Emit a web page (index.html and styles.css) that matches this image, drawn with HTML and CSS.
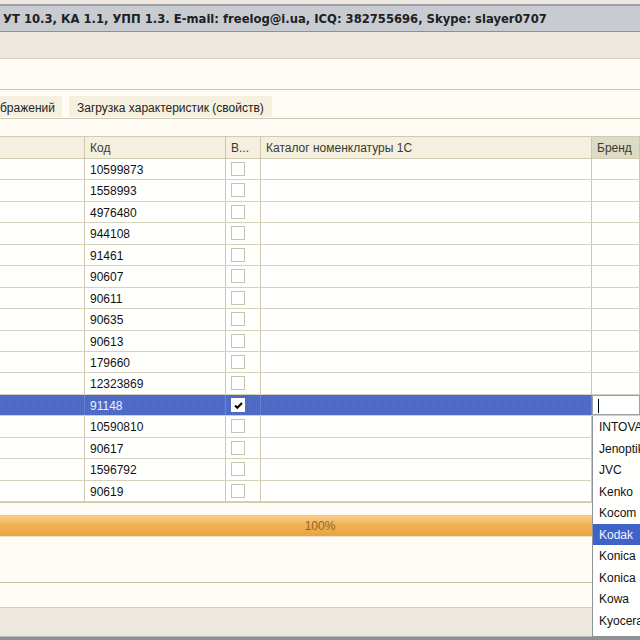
FILE: index.html
```html
<!DOCTYPE html>
<html>
<head>
<meta charset="utf-8">
<link rel="stylesheet" href="styles.css">
</head>
<body>
<div class="screen">
  <div class="topstrip"></div>
  <div class="titlebar">УТ 10.3, КА 1.1, УПП 1.3. E-mail: freelog@i.ua, ICQ: 382755696, Skype: slayer0707</div>
  <div class="toolbar"></div>
  <div class="panel"></div>
  <div class="tabs">
    <div class="tab first">бражений</div>
    <div class="tab">Загрузка характеристик (свойств)</div>
  </div>
  <div class="gap"></div>
  <div class="grid">
    <div class="row head">
      <div class="cell"></div>
      <div class="cell">Код</div>
      <div class="cell">В...</div>
      <div class="cell">Каталог номенклатуры 1С</div>
      <div class="cell brand">Бренд</div>
    </div>
    <div class="row"><div class="cell"></div><div class="cell">10599873</div><div class="cell chk"><span class="box"></span></div><div class="cell"></div><div class="cell"></div></div>
    <div class="row"><div class="cell"></div><div class="cell">1558993</div><div class="cell chk"><span class="box"></span></div><div class="cell"></div><div class="cell"></div></div>
    <div class="row"><div class="cell"></div><div class="cell">4976480</div><div class="cell chk"><span class="box"></span></div><div class="cell"></div><div class="cell"></div></div>
    <div class="row"><div class="cell"></div><div class="cell">944108</div><div class="cell chk"><span class="box"></span></div><div class="cell"></div><div class="cell"></div></div>
    <div class="row"><div class="cell"></div><div class="cell">91461</div><div class="cell chk"><span class="box"></span></div><div class="cell"></div><div class="cell"></div></div>
    <div class="row"><div class="cell"></div><div class="cell">90607</div><div class="cell chk"><span class="box"></span></div><div class="cell"></div><div class="cell"></div></div>
    <div class="row"><div class="cell"></div><div class="cell">90611</div><div class="cell chk"><span class="box"></span></div><div class="cell"></div><div class="cell"></div></div>
    <div class="row"><div class="cell"></div><div class="cell">90635</div><div class="cell chk"><span class="box"></span></div><div class="cell"></div><div class="cell"></div></div>
    <div class="row"><div class="cell"></div><div class="cell">90613</div><div class="cell chk"><span class="box"></span></div><div class="cell"></div><div class="cell"></div></div>
    <div class="row"><div class="cell"></div><div class="cell">179660</div><div class="cell chk"><span class="box"></span></div><div class="cell"></div><div class="cell"></div></div>
    <div class="row"><div class="cell"></div><div class="cell">12323869</div><div class="cell chk"><span class="box"></span></div><div class="cell"></div><div class="cell"></div></div>
    <div class="row sel"><div class="cell"></div><div class="cell">91148</div><div class="cell chk"><span class="box on"><svg width="11" height="11" viewBox="0 0 11 11"><path d="M2 5.5 L4.3 7.8 L9 3" fill="none" stroke="#000" stroke-width="2"/></svg></span></div><div class="cell"></div><div class="cell edit"><span class="caret"></span></div></div>
    <div class="row"><div class="cell"></div><div class="cell">10590810</div><div class="cell chk"><span class="box"></span></div><div class="cell"></div><div class="cell"></div></div>
    <div class="row"><div class="cell"></div><div class="cell">90617</div><div class="cell chk"><span class="box"></span></div><div class="cell"></div><div class="cell"></div></div>
    <div class="row"><div class="cell"></div><div class="cell">1596792</div><div class="cell chk"><span class="box"></span></div><div class="cell"></div><div class="cell"></div></div>
    <div class="row"><div class="cell"></div><div class="cell">90619</div><div class="cell chk"><span class="box"></span></div><div class="cell"></div><div class="cell"></div></div>
  </div>
  <div class="gridfoot"></div>
  <div class="progress">100%</div>
  <div class="area"></div>
  <div class="area2"></div>
  <div class="status"></div>
  <div class="bottomline"></div>

  <ul class="dropdown">
    <li>INTOVA</li>
    <li>Jenoptik</li>
    <li>JVC</li>
    <li>Kenko</li>
    <li>Kocom</li>
    <li class="hl">Kodak</li>
    <li>Konica</li>
    <li>Konica</li>
    <li>Kowa</li>
    <li>Kyocera</li>
  </ul>
</div>
</body>
</html>
```

FILE: styles.css
```css
* { box-sizing: border-box; }
html, body { margin: 0; padding: 0; }
body {
  width: 640px;
  height: 640px;
  overflow: hidden;
  background: #fffcf5;
  font-family: "Liberation Sans", Arial, sans-serif;
  font-size: 12px;
  color: #000;
}
.screen {
  position: relative;
  width: 640px;
  height: 640px;
  overflow: hidden;
  display: flex;
  flex-direction: column;
}
.topstrip {
  height: 4px;
  background: #ece7df;
}
.titlebar {
  height: 28px;
  background: #c8ccd1;
  border-top: 2px solid #9c9fa3;
  border-bottom: 1px solid #8e9194;
  font-family: "DejaVu Sans", Verdana, sans-serif;
  font-weight: bold;
  font-size: 11.6px;
  color: #1e2024;
  padding: 6px 0 0 3px;
  white-space: nowrap;
}
.toolbar {
  height: 27px;
  background: #ece7df;
  border-bottom: 1px solid #d6cfbf;
}
.panel {
  height: 31px;
  background: #fffcf5;
  border-bottom: 1px solid #cfc9b3;
}
.tabs {
  height: 29px;
  background: #fffcf5;
  border-bottom: 1px solid #cfc9b3;
  display: flex;
  align-items: flex-end;
  gap: 7px;
  padding-bottom: 1px;
}
.tab {
  height: 21px;
  background: #f6f0e1;
  padding: 5px 8px 0 8px;
  color: #222;
  white-space: nowrap;
}
.tab.first { padding-left: 0; width: 62px; }
.gap {
  height: 17px;
  background: #fffcf5;
}
.grid {
  display: flex;
  flex-direction: column;
  border-top: 1px solid #d0caae;
}
.row {
  display: grid;
  grid-template-columns: 85px 141px 35px 331px 48px;
  height: 21.45px;
  border-bottom: 1px solid #d5d1bd;
  background: #fffffd;
}
.row.head {
  height: 22px;
  background: #f5efdf;
  border-bottom: 1px solid #d0caae;
  color: #333;
}
.cell {
  border-right: 1px solid #cbc7ae;
  padding: 4px 0 0 5px;
  white-space: nowrap;
  overflow: hidden;
  color: #111;
}
.head .cell { padding-top: 4px; color: #3a3a30; }
.head .brand { background: #dcdcc6; }
.chk { padding: 3px 0 0 5px; }
.box {
  display: block;
  width: 14px;
  height: 14px;
  border: 1px solid #c6c3b3;
  background: #fff;
}
.box.on {
  border-color: #fff;
  padding: 1px 0 0 1px;
}
.box svg { display: block; }
.row.sel {
  background: #4a67c7;
  background-image: repeating-linear-gradient(90deg, rgba(255,255,255,0.05) 0 1px, transparent 1px 2px);
}
.row.sel .cell { color: #eef0ff; border-right-color: #6c82cf; }
.row.sel .edit {
  background: #fff;
  border: 1px solid #9aa0a8;
  padding: 1px 0 0 5px;
}
.caret {
  display: block;
  width: 1px;
  height: 14px;
  margin-top: 2px;
  background: #000;
}
.gridfoot {
  height: 13px;
  border-top: 1px solid #d0caae;
  background: #fffcf5;
}
.progress {
  height: 22px;
  border-top: 1px solid #d7cfae;
  border-bottom: 1px solid #ece0c6;
  background: linear-gradient(#f8cd8a, #efb254 45%, #e9a443);
  text-align: center;
  color: #94631f;
  padding-top: 3px;
}
.area {
  height: 46px;
  background: #fffcf5;
  border-bottom: 1px solid #c9c5aa;
}
.area2 {
  height: 25px;
  background: #fffcf5;
  border-bottom: 1px solid #d2cec2;
}
.status {
  height: 28px;
  background: #ece7df;
}
.bottomline {
  flex: 1;
  background: #8e9194;
  border-top: 1px solid #b9b9b9;
}
.dropdown {
  position: absolute;
  left: 592px;
  top: 416px;
  width: 60px;
  margin: 0;
  padding: 0 0 0 2px;
  list-style: none;
  background: #fffffd;
  border-left: 1px solid #8e9299;
  border-bottom: 1px solid #8e9299;
  height: 221px;
}
.dropdown li {
  height: 21.5px;
  padding: 4px 0 0 4px;
  white-space: nowrap;
  color: #111;
}
.dropdown li.hl {
  background: #3f63c9;
  color: #f2f4ff;
  margin-left: -2px;
  padding-left: 6px;
}
```
